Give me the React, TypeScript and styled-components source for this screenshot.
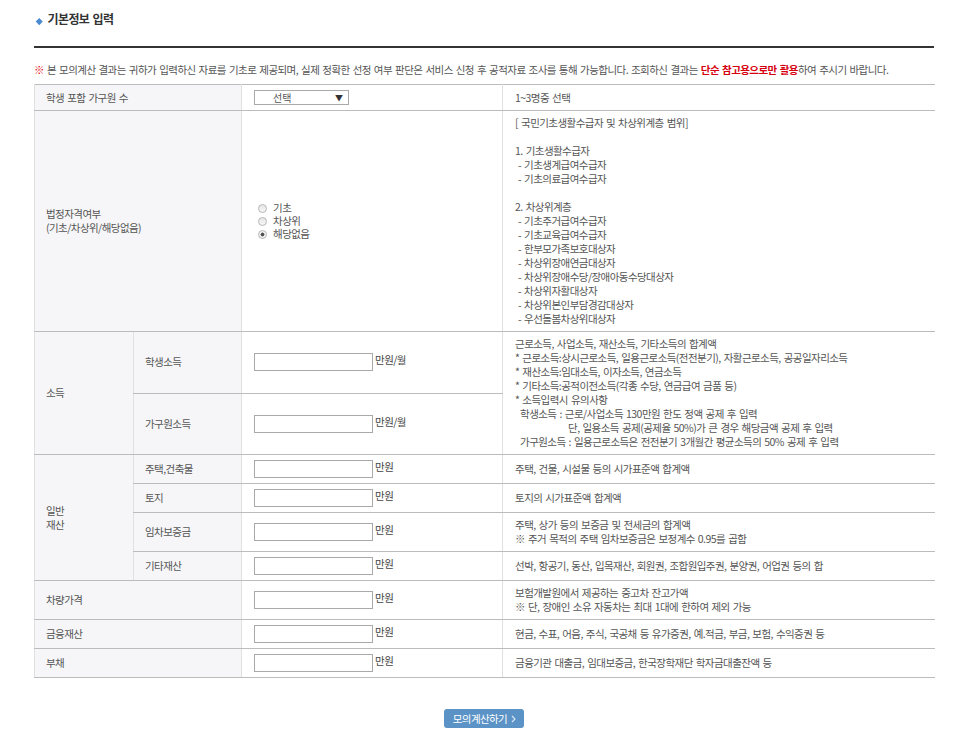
import React from "react";
import styled, { createGlobalStyle } from "styled-components";

const Global = createGlobalStyle`
  html, body { margin: 0; padding: 0; background: #fff; }
  body {
    font-family: "Noto Sans CJK KR", "Noto Sans", sans-serif;
    color: #555;
    font-size: 10.5px;
    letter-spacing: -0.55px;
    word-spacing: 1.2px;
  }
  * { box-sizing: border-box; }
`;

const Page = styled.div`
  width: 934px;
  padding-left: 34px;
`;

const Title = styled.h2`
  margin: 11px 0 0 0;
  height: 16px;
  display: flex;
  align-items: center;
  font-size: 12px;
  line-height: 16px;
  letter-spacing: -0.6px;
  font-weight: 700;
  color: #333;
`;

const Diamond = styled.span`
  display: inline-block;
  width: 4.5px;
  height: 4.5px;
  margin: 5px 6px 0 3px;
  background: #4a8ad0;
  transform: rotate(45deg);
`;

const Rule = styled.div`
  margin-top: 19px;
  height: 2px;
  background: #333;
`;

const Notice = styled.p`
  margin: 15px 0 0 0;
  line-height: 14px;
  color: #555;
  white-space: nowrap;
`;

const Mark = styled.span`
  color: #e60012;
`;

const Strong = styled.strong`
  color: #d7000f;
  font-weight: 700;
`;

const Table = styled.table`
  margin-top: 7px;
  width: 900px;
  border-collapse: collapse;
  table-layout: fixed;
  border-top: 1px solid #bcbcbc;
  border-left: 1px solid #cfcfcf;
`;

const Th = styled.th`
  background: #f6f6f8;
  text-align: left;
  font-weight: 400;
  color: #555;
  padding: 5px 11px;
  line-height: 14px;
  border-bottom: 1px solid #bcbcbc;
  border-left: 1px solid #e0e0e0;
  vertical-align: middle;
`;

const Td = styled.td`
  padding: 5px 12px;
  line-height: 14px;
  border-bottom: 1px solid #bcbcbc;
  border-left: 1px solid #e0e0e0;
  vertical-align: middle;
  color: #555;
`;

const Field = styled.div`
  display: flex;
  align-items: flex-start;
  gap: 2px;
  height: 18px;
`;

const TextInput = styled.input`
  width: 119px;
  height: 18px;
  border: 1px solid #a9a9a9;
  padding: 0 3px;
  font: inherit;
  margin: 0;
  background: #fff;
`;

const Unit = styled.span`
  line-height: 14px;
  color: #444;
`;

const SelectWrap = styled.div`
  position: relative;
  width: 95px;
  height: 15px;
`;

const Select = styled.select`
  appearance: none;
  -webkit-appearance: none;
  width: 95px;
  height: 15px;
  margin: 0;
  border: 1px solid #a9a9a9;
  border-radius: 0;
  background: #fff;
  padding: 0 0 0 18px;
  font: inherit;
  font-size: 10px;
  line-height: 13px;
  color: #555;
`;

const Arrow = styled.span`
  position: absolute;
  right: 6px;
  top: 1px;
  font-size: 8px;
  line-height: 13px;
  color: #333;
  pointer-events: none;
  letter-spacing: 0;
`;

const RadioList = styled.div`
  display: flex;
  flex-direction: column;
  padding-left: 4px;
`;

const RadioRow = styled.label`
  display: flex;
  align-items: center;
  height: 13px;
  line-height: 12px;
  gap: 6px;
  color: #555;
`;

const RadioDot = styled.span<{ $on?: boolean }>`
  display: inline-block;
  width: 9px;
  height: 9px;
  border-radius: 50%;
  border: 1px solid #b8b8b8;
  background: ${(p) =>
    p.$on
      ? "radial-gradient(circle, #555 0 1.8px, #f0f0f0 2.2px)"
      : "linear-gradient(#e6e6e6, #f6f6f6)"};
`;

const Line = styled.div<{ $indent?: number }>`
  white-space: pre;
  padding-left: ${(p) => p.$indent ?? 0}px;
  min-height: 14px;
`;

const Footer = styled.div`
  width: 900px;
  display: flex;
  justify-content: center;
  margin-top: 31px;
`;

const Button = styled.button`
  display: flex;
  align-items: center;
  gap: 4px;
  height: 19px;
  padding: 0 8px 0 9px;
  border: 0;
  border-radius: 3px;
  background: #5b93c6;
  color: #fff;
  font: inherit;
  font-size: 10.5px;
  letter-spacing: -0.6px;
  cursor: pointer;
`;

const Chev = () => (
  <svg width="5" height="8" viewBox="0 0 5 8">
    <path d="M1 1l3 3-3 3" fill="none" stroke="#dfeaf5" strokeWidth="1.1" />
  </svg>
);

const Money = ({ unit = "만원" }: { unit?: string }) => (
  <Field>
    <TextInput type="text" />
    <Unit>{unit}</Unit>
  </Field>
);

const Lines = ({ items }: { items: (string | [string, number])[] }) => (
  <>
    {items.map((it, i) =>
      typeof it === "string" ? (
        <Line key={i}>{it}</Line>
      ) : (
        <Line key={i} $indent={it[1]}>
          {it[0]}
        </Line>
      )
    )}
  </>
);

const qualLines = [
  "[ 국민기초생활수급자 및 차상위계층 범위]",
  "",
  "1. 기초생활수급자",
  " - 기초생계급여수급자",
  " - 기초의료급여수급자",
  "",
  "2. 차상위계층",
  " - 기초주거급여수급자",
  " - 기초교육급여수급자",
  " - 한부모가족보호대상자",
  " - 차상위장애연금대상자",
  " - 차상위장애수당/장애아동수당대상자",
  " - 차상위자활대상자",
  " - 차상위본인부담경감대상자",
  " - 우선돌봄차상위대상자",
];

const incomeLines: (string | [string, number])[] = [
  "근로소득, 사업소득, 재산소득, 기타소득의 합계액",
  "* 근로소득:상시근로소득, 일용근로소득(전전분기), 자활근로소득, 공공일자리소득",
  "* 재산소득:임대소득, 이자소득, 연금소득",
  "* 기타소득:공적이전소득(각종 수당, 연금급여 금품 등)",
  "* 소득입력시 유의사항",
  ["학생소득 : 근로/사업소득 130만원 한도 정액 공제 후 입력", 5],
  ["단, 일용소득 공제(공제율 50%)가 큰 경우 해당금액 공제 후 입력", 53],
  ["가구원소득 : 일용근로소득은 전전분기 3개월간 평균소득의 50% 공제 후 입력", 5],
];

export default function App() {
  return (
    <>
      <Global />
      <Page>
        <Title>
          <Diamond />
          기본정보 입력
        </Title>
        <Rule />
        <Notice>
          <Mark>※</Mark> 본 모의계산 결과는 귀하가 입력하신 자료를 기초로 제공되며, 실제 정확한 선정 여부 판단은
          서비스 신청 후 공적자료 조사를 통해 가능합니다. 조회하신 결과는 <Strong>단순 참고용으로만 활용</Strong>
          하여 주시기 바랍니다.
        </Notice>
        <Table>
          <colgroup>
            <col style={{ width: 99 }} />
            <col style={{ width: 108 }} />
            <col style={{ width: 261 }} />
            <col style={{ width: 432 }} />
          </colgroup>
          <tbody>
            <tr>
              <Th colSpan={2}>학생 포함 가구원 수</Th>
              <Td>
                <SelectWrap>
                  <Select defaultValue="">
                    <option value="">선택</option>
                    <option value="1">1</option>
                    <option value="2">2</option>
                    <option value="3">3</option>
                  </Select>
                  <Arrow>▼</Arrow>
                </SelectWrap>
              </Td>
              <Td>1~3명중 선택</Td>
            </tr>
            <tr>
              <Th colSpan={2}>
                법정자격여부
                <br />
                (기초/차상위/해당없음)
              </Th>
              <Td>
                <RadioList>
                  <RadioRow>
                    <RadioDot />
                    기초
                  </RadioRow>
                  <RadioRow>
                    <RadioDot />
                    차상위
                  </RadioRow>
                  <RadioRow>
                    <RadioDot $on />
                    해당없음
                  </RadioRow>
                </RadioList>
              </Td>
              <Td>
                <Lines items={qualLines} />
              </Td>
            </tr>
            <tr>
              <Th rowSpan={2}>소득</Th>
              <Th>학생소득</Th>
              <Td>
                <Money unit="만원/월" />
              </Td>
              <Td rowSpan={2}>
                <Lines items={incomeLines} />
              </Td>
            </tr>
            <tr>
              <Th>가구원소득</Th>
              <Td>
                <Money unit="만원/월" />
              </Td>
            </tr>
            <tr>
              <Th rowSpan={4}>
                일반
                <br />
                재산
              </Th>
              <Th>주택,건축물</Th>
              <Td>
                <Money />
              </Td>
              <Td>주택, 건물, 시설물 등의 시가표준액 합계액</Td>
            </tr>
            <tr>
              <Th>토지</Th>
              <Td>
                <Money />
              </Td>
              <Td>토지의 시가표준액 합계액</Td>
            </tr>
            <tr>
              <Th>임차보증금</Th>
              <Td>
                <Money />
              </Td>
              <Td>
                <Line>주택, 상가 등의 보증금 및 전세금의 합계액</Line>
                <Line>※ 주거 목적의 주택 임차보증금은 보정계수 0.95를 곱함</Line>
              </Td>
            </tr>
            <tr>
              <Th>기타재산</Th>
              <Td>
                <Money />
              </Td>
              <Td>선박, 항공기, 동산, 입목재산, 회원권, 조합원입주권, 분양권, 어업권 등의 합</Td>
            </tr>
            <tr>
              <Th colSpan={2}>차량가격</Th>
              <Td>
                <Money />
              </Td>
              <Td>
                <Line>보험개발원에서 제공하는 중고차 잔고가액</Line>
                <Line>※ 단, 장애인 소유 자동차는 최대 1대에 한하여 제외 가능</Line>
              </Td>
            </tr>
            <tr>
              <Th colSpan={2}>금융재산</Th>
              <Td>
                <Money />
              </Td>
              <Td>현금, 수표, 어음, 주식, 국공채 등 유가증권, 예.적금, 부금, 보험, 수익증권 등</Td>
            </tr>
            <tr>
              <Th colSpan={2}>부채</Th>
              <Td>
                <Money />
              </Td>
              <Td>금융기관 대출금, 임대보증금, 한국장학재단 학자금대출잔액 등</Td>
            </tr>
          </tbody>
        </Table>
        <Footer>
          <Button type="button">
            모의계산하기
            <Chev />
          </Button>
        </Footer>
      </Page>
    </>
  );
}
